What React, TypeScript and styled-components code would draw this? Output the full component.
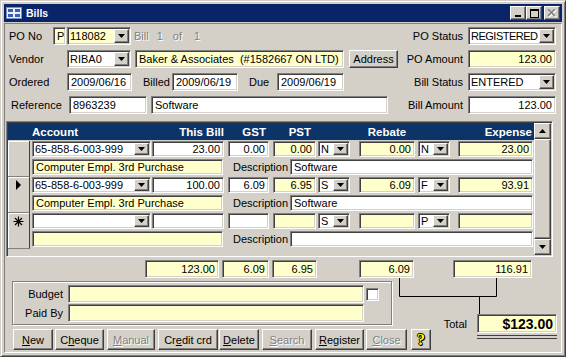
import React from 'react'
import styled, { createGlobalStyle, css } from 'styled-components'

const FACE = '#d4d0c8'
const YELLOW = '#ffffcc'

const GlobalStyle = createGlobalStyle`
  * { box-sizing: border-box; }
  html, body { margin: 0; padding: 0; background: ${FACE}; }
  body {
    font-family: "Liberation Sans", Arial, sans-serif;
    font-size: 11px;
    color: #000;
  }
`

const sunken = css`
  border: 1px solid;
  border-color: #808080 #ffffff #ffffff #808080;
  box-shadow: inset 1px 1px 0 #404040, inset -1px -1px 0 ${FACE};
`

const raised = css`
  border: 1px solid;
  border-color: #ffffff #404040 #404040 #ffffff;
  box-shadow: inset -1px -1px 0 #808080;
`

const Window = styled.div`
  width: 566px;
  height: 357px;
  padding: 3px;
  background: ${FACE};
  border: 1px solid;
  border-color: ${FACE} #404040 #404040 ${FACE};
  box-shadow: inset 1px 1px 0 #fff, inset -1px -1px 0 #808080;
  display: flex;
  flex-direction: column;
`

const TitleBar = styled.div`
  height: 18px;
  flex-shrink: 0;
  background: #0a246a;
  display: flex;
  align-items: center;
  padding: 0 2px 0 2px;
  color: #fff;
`

const Title = styled.span`
  margin-left: 4px;
  font-weight: bold;
  font-size: 10.5px;
`

const CaptionGroup = styled.div`
  margin-left: auto;
  display: flex;
  align-items: center;
`

const CapBtn = styled.div<{ $ml?: number }>`
  ${raised}
  width: 16px;
  height: 14px;
  margin-left: ${p => p.$ml ?? 0}px;
  background: ${FACE};
  display: flex;
  align-items: center;
  justify-content: center;
`

const MinGlyph = styled.div`
  width: 6px;
  height: 2px;
  background: #000;
  margin-top: 6px;
  margin-right: 1px;
`

const MaxGlyph = styled.div`
  width: 9px;
  height: 9px;
  border: 1px solid #000;
  border-top-width: 2px;
`

const Client = styled.div`
  flex: 1;
  margin-top: 1px;
  border: 1px solid;
  border-color: #808080 #ffffff #ffffff #808080;
  display: flex;
  flex-direction: column;
  min-height: 0;
`

const TopForm = styled.div`
  display: flex;
  flex-direction: column;
  gap: 5px;
  padding: 3px 5px 0 4px;
`

const Row = styled.div`
  display: flex;
  align-items: center;
  height: 18px;
`

const Label = styled.span<{ $w?: number; $ml?: number; $right?: boolean }>`
  flex-shrink: 0;
  width: ${p => (p.$w ? `${p.$w}px` : 'auto')};
  margin-left: ${p => p.$ml ?? 0}px;
  text-align: ${p => (p.$right ? 'right' : 'left')};
  white-space: nowrap;
`

const Dim = styled.span<{ $ml: number }>`
  margin-left: ${p => p.$ml}px;
  color: #808080;
  text-shadow: 1px 1px 0 #fff;
`

const RightGroup = styled.div`
  margin-left: auto;
  display: flex;
  align-items: center;
`

type BoxProps = { $w: number; $h?: number; $ml?: number; $bg?: string; $right?: boolean }

const Field = styled.div<BoxProps>`
  ${sunken}
  flex-shrink: 0;
  width: ${p => p.$w}px;
  height: ${p => p.$h ?? 18}px;
  margin-left: ${p => p.$ml ?? 0}px;
  background: ${p => p.$bg ?? '#fff'};
  padding: 0 ${p => (p.$right ? 3 : 2)}px 0 3px;
  display: flex;
  align-items: center;
  justify-content: ${p => (p.$right ? 'flex-end' : 'flex-start')};
  white-space: nowrap;
  overflow: hidden;
  line-height: 1;
`

const ComboBox = styled(Field)`
  padding-right: 1px;
  padding-left: 2px;
  justify-content: space-between;
`

const ComboText = styled.span<{ $tight?: boolean }>`
  flex: 1;
  overflow: hidden;
  letter-spacing: ${p => (p.$tight ? '-0.5px' : 'normal')};
`

const DropButton = styled.div`
  ${raised}
  width: 15px;
  align-self: stretch;
  margin: 1px 0;
  background: ${FACE};
  display: flex;
  align-items: center;
  justify-content: center;
  flex-shrink: 0;
`

const Arrow = ({ up }: { up?: boolean }) => (
  <svg width="7" height="4" viewBox="0 0 7 4">
    <polygon points={up ? '0,4 7,4 3.5,0' : '0,0 7,0 3.5,4'} fill="#000" />
  </svg>
)

function Combo(props: { w: number; ml?: number; h?: number; bg?: string; tight?: boolean; children?: React.ReactNode }) {
  return (
    <ComboBox $w={props.w} $ml={props.ml} $h={props.h} $bg={props.bg}>
      <ComboText $tight={props.tight}>{props.children}</ComboText>
      <DropButton>
        <Arrow />
      </DropButton>
    </ComboBox>
  )
}

const Button = styled.div<{ $w: number; $ml?: number; $h?: number; $off?: boolean }>`
  ${raised}
  flex-shrink: 0;
  width: ${p => p.$w}px;
  height: ${p => p.$h ?? 21}px;
  margin-left: ${p => p.$ml ?? 0}px;
  background: ${FACE};
  display: flex;
  align-items: center;
  justify-content: center;
  white-space: nowrap;
  color: ${p => (p.$off ? '#808080' : '#000')};
  text-shadow: ${p => (p.$off ? '1px 1px 0 #fff' : 'none')};

  u {
    text-decoration: underline;
  }
`

const HelpMark = styled.span`
  font-family: "Liberation Serif", serif;
  font-weight: bold;
  font-size: 16px;
  color: #ffff00;
  text-shadow: 1px 0 0 #000, -1px 0 0 #000, 0 1px 0 #000, 0 -1px 0 #000, 1px 1px 0 #000;
`

/* subform */

const Subform = styled.div`
  ${sunken}
  margin: 7px 8px 0 1px;
  height: 136px;
  padding: 1px;
  display: flex;
  background: ${FACE};
  flex-shrink: 0;
`

const GridArea = styled.div`
  flex: 1;
  display: flex;
  flex-direction: column;
`

const GridHead = styled.div`
  height: 17px;
  background: #0c3468;
  display: flex;
  align-items: center;
  color: #fff;
  font-weight: bold;
  font-size: 11.5px;
  flex-shrink: 0;
`

const HeadCell = styled.div<{ $w: number; $ml?: number; $align?: string; $pr?: number }>`
  flex-shrink: 0;
  width: ${p => p.$w}px;
  margin-left: ${p => p.$ml ?? 0}px;
  padding-right: ${p => p.$pr ?? 0}px;
  text-align: ${p => p.$align ?? 'left'};
  white-space: nowrap;
`

const Records = styled.div`
  padding-top: 1px;
  display: flex;
  flex-direction: column;
`

const Record = styled.div`
  display: flex;
  height: 36px;
`

const Selector = styled.div`
  width: 22px;
  height: 36px;
  flex-shrink: 0;
  background: ${FACE};
  border-right: 1px solid #404040;
  border-bottom: 1px solid #808080;
  box-shadow: inset 1px 1px 0 #fff;
  display: flex;
  justify-content: center;
  padding-top: 3px;
`

const Lines = styled.div`
  display: flex;
  flex-direction: column;
  gap: 2px;
`

const Line = styled.div`
  display: flex;
  align-items: center;
  height: 16px;
`

const ScrollBar = styled.div`
  width: 17px;
  display: flex;
  flex-direction: column;
  flex-shrink: 0;
`

const ScrollBtn = styled.div`
  ${raised}
  height: 16px;
  background: ${FACE};
  display: flex;
  align-items: center;
  justify-content: center;
`

const ScrollThumb = styled.div`
  ${raised}
  flex: 1;
  background: ${FACE};
`

/* totals and bottom */

const TotalsRow = styled.div`
  display: flex;
  height: 18px;
  margin-top: 3px;
  padding-left: 140px;
  flex-shrink: 0;
`

const BottomArea = styled.div`
  flex: 1;
  display: flex;
  position: relative;
`

const LeftCol = styled.div`
  display: flex;
  flex-direction: column;
  padding-left: 7px;
`

const GroupBox = styled.div`
  margin-top: 3px;
  width: 380px;
  height: 44px;
  border: 1px solid #808080;
  box-shadow: inset 1px 1px 0 #fff, 1px 1px 0 #fff;
  padding-top: 3px;
  display: flex;
  flex-direction: column;
  gap: 1px;
`

const CheckBox = styled.div`
  ${sunken}
  width: 13px;
  height: 13px;
  margin-left: 2px;
  background: #fff;
  flex-shrink: 0;
`

const ButtonRow = styled.div`
  display: flex;
  margin-top: 4px;
  padding-left: 1px;
`

const RightCol = styled.div`
  flex: 1;
  display: flex;
  flex-direction: column;
  align-items: flex-end;
  padding: 36px 4px 0 0;
`

const TotalLine = styled.div`
  display: flex;
  align-items: center;
`

const TotalBox = styled(Field)`
  font-weight: bold;
  font-size: 14px;
`

const DoubleRule = styled.div`
  width: 80px;
  height: 4px;
  margin-top: 2px;
  border-top: 1px solid #404040;
  border-bottom: 1px solid #404040;
`

const Connector = styled.svg`
  position: absolute;
  left: 390px;
  top: 0;
`

const TitleIcon = () => (
  <svg width="16" height="14" viewBox="0 0 16 14">
    <rect x="0.5" y="1.5" width="15" height="11" fill="#e8eef8" stroke="#7890c0" />
    <rect x="2" y="3" width="5" height="3" fill="#3a5fb0" />
    <rect x="9" y="3" width="5" height="3" fill="#3a5fb0" />
    <rect x="2" y="8" width="5" height="3" fill="#3a5fb0" />
    <rect x="9" y="8" width="5" height="3" fill="#3a5fb0" />
  </svg>
)

const CloseGlyph = () => (
  <svg width="10" height="9" viewBox="0 0 10 9">
    <path d="M2 1 L9 8 M9 1 L2 8" stroke="#fff" strokeWidth="1.6" />
    <path d="M1 0 L8 7 M8 0 L1 7" stroke="#808080" strokeWidth="1.6" />
  </svg>
)

const CurrentMark = () => (
  <svg width="7" height="10" viewBox="0 0 7 10">
    <polygon points="1,0 6,5 1,10" fill="#000" />
  </svg>
)

const NewMark = () => (
  <svg width="11" height="11" viewBox="0 0 11 11">
    <path d="M5.5 0.5 V10.5 M0.5 5.5 H10.5 M2 2 L9 9 M9 2 L2 9" stroke="#000" strokeWidth="1.2" />
  </svg>
)

type Rec = {
  mark?: 'current' | 'new'
  account: string
  bill: string
  gst: string
  pst: string
  pstCode: string
  rebate: string
  rebCode: string
  expense: string
  name: string
  desc: string
}

const records: Rec[] = [
  { account: '65-858-6-003-999', bill: '23.00', gst: '0.00', pst: '0.00', pstCode: 'N', rebate: '0.00', rebCode: 'N', expense: '23.00', name: 'Computer Empl. 3rd Purchase', desc: 'Software' },
  { mark: 'current', account: '65-858-6-003-999', bill: '100.00', gst: '6.09', pst: '6.95', pstCode: 'S', rebate: '6.09', rebCode: 'F', expense: '93.91', name: 'Computer Empl. 3rd Purchase', desc: 'Software' },
  { mark: 'new', account: '', bill: '', gst: '', pst: '', pstCode: 'S', rebate: '', rebCode: 'P', expense: '', name: '', desc: '' },
]

export default function App() {
  return (
    <>
      <GlobalStyle />
      <Window>
        <TitleBar>
          <TitleIcon />
          <Title>Bills</Title>
          <CaptionGroup>
            <CapBtn><MinGlyph /></CapBtn>
            <CapBtn><MaxGlyph /></CapBtn>
            <CapBtn $ml={2}><CloseGlyph /></CapBtn>
          </CaptionGroup>
        </TitleBar>

        <Client>
          <TopForm>
            <Row>
              <Label $w={44}>PO No</Label>
              <Field $w={13} $bg={YELLOW}>P</Field>
              <Combo w={64} ml={1} bg={YELLOW}>118082</Combo>
              <Dim $ml={3}>Bill</Dim>
              <Dim $ml={8}>1</Dim>
              <Dim $ml={10}>of</Dim>
              <Dim $ml={12}>1</Dim>
              <RightGroup>
                <Label>PO Status</Label>
                <Combo w={88} ml={5} tight>REGISTERED</Combo>
              </RightGroup>
            </Row>
            <Row>
              <Label $w={58}>Vendor</Label>
              <Combo w={64}>RIBA0</Combo>
              <Field $w={209} $ml={4} $bg={YELLOW}>Baker &amp; Associates&nbsp; (#1582667 ON LTD)</Field>
              <Button $w={49} $h={18} $ml={5}>Address</Button>
              <RightGroup>
                <Label>PO Amount</Label>
                <Field $w={88} $ml={5} $bg={YELLOW} $right>123.00</Field>
              </RightGroup>
            </Row>
            <Row>
              <Label $w={58}>Ordered</Label>
              <Field $w={65}>2009/06/16</Field>
              <Label $w={29} $ml={11}>Billed</Label>
              <Field $w={66}>2009/06/19</Field>
              <Label $w={28} $ml={11}>Due</Label>
              <Field $w={67}>2009/06/19</Field>
              <RightGroup>
                <Label>Bill Status</Label>
                <Combo w={88} ml={5}>ENTERED</Combo>
              </RightGroup>
            </Row>
            <Row>
              <Label $w={58} $ml={2}>Reference</Label>
              <Field $w={78}>8963239</Field>
              <Field $w={237} $ml={4}>Software</Field>
              <RightGroup>
                <Label>Bill Amount</Label>
                <Field $w={88} $ml={5} $right>123.00</Field>
              </RightGroup>
            </Row>
          </TopForm>

          <Subform>
            <GridArea>
              <GridHead>
                <HeadCell $w={24} />
                <HeadCell $w={119}>Account</HeadCell>
                <HeadCell $w={72} $ml={1} $align="right">This Bill</HeadCell>
                <HeadCell $w={41} $ml={4} $align="right" $pr={3}>GST</HeadCell>
                <HeadCell $w={43} $ml={4} $align="right" $pr={5}>PST</HeadCell>
                <HeadCell $w={32} $ml={2} />
                <HeadCell $w={56} $ml={9} $align="center">Rebate</HeadCell>
                <HeadCell $w={32} $ml={3} />
                <HeadCell $w={75} $ml={8} $align="right" $pr={1}>Expense</HeadCell>
              </GridHead>
              <Records>
                {records.map((r, i) => (
                  <Record key={i}>
                    <Selector>
                      {r.mark === 'current' && <CurrentMark />}
                      {r.mark === 'new' && <NewMark />}
                    </Selector>
                    <Lines>
                      <Line>
                        <Combo w={119} ml={2} h={16}>{r.account}</Combo>
                        <Field $w={72} $ml={1} $h={16} $right>{r.bill}</Field>
                        <Field $w={41} $ml={4} $h={16} $right>{r.gst}</Field>
                        <Field $w={43} $ml={4} $h={16} $bg={YELLOW} $right>{r.pst}</Field>
                        <Combo w={32} ml={2} h={16}>{r.pstCode}</Combo>
                        <Field $w={56} $ml={9} $h={16} $bg={YELLOW} $right>{r.rebate}</Field>
                        <Combo w={32} ml={3} h={16}>{r.rebCode}</Combo>
                        <Field $w={75} $ml={8} $h={16} $bg={YELLOW} $right>{r.expense}</Field>
                      </Line>
                      <Line>
                        <Field $w={191} $ml={2} $h={16} $bg={YELLOW}>{r.name}</Field>
                        <Label $w={57} $ml={10}>Description</Label>
                        <Field $w={243} $h={16}>{r.desc}</Field>
                      </Line>
                    </Lines>
                  </Record>
                ))}
              </Records>
            </GridArea>
            <ScrollBar>
              <ScrollBtn><Arrow up /></ScrollBtn>
              <ScrollThumb />
              <ScrollBtn><Arrow /></ScrollBtn>
            </ScrollBar>
          </Subform>

          <TotalsRow>
            <Field $w={74} $bg={YELLOW} $right>123.00</Field>
            <Field $w={47} $ml={3} $bg={YELLOW} $right>6.09</Field>
            <Field $w={45} $ml={3} $bg={YELLOW} $right>6.95</Field>
            <Field $w={55} $ml={42} $bg={YELLOW} $right>6.09</Field>
            <Field $w={79} $ml={39} $bg={YELLOW} $right>116.91</Field>
          </TotalsRow>

          <BottomArea>
            <LeftCol>
              <GroupBox>
                <Row>
                  <Label $w={50} $right>Budget</Label>
                  <Field $w={296} $ml={5} $bg={YELLOW} />
                  <CheckBox />
                </Row>
                <Row>
                  <Label $w={50} $right>Paid By</Label>
                  <Field $w={296} $ml={5} $bg={YELLOW} />
                </Row>
              </GroupBox>
              <ButtonRow>
                <Button $w={40}><span><u>N</u>ew</span></Button>
                <Button $w={49} $ml={2}><span>C<u>h</u>eque</span></Button>
                <Button $w={48} $ml={3} $off><span><u>M</u>anual</span></Button>
                <Button $w={60} $ml={3}><span>Cr<u>e</u>dit crd</span></Button>
                <Button $w={40} $ml={1}><span><u>D</u>elete</span></Button>
                <Button $w={50} $ml={3} $off><span><u>S</u>earch</span></Button>
                <Button $w={49} $ml={3}><span><u>R</u>egister</span></Button>
                <Button $w={41} $ml={2} $off><span><u>C</u>lose</span></Button>
                <Button $w={20} $ml={4}><HelpMark>?</HelpMark></Button>
              </ButtonRow>
            </LeftCol>
            <RightCol>
              <TotalLine>
                <Label>Total</Label>
                <TotalBox $w={80} $h={19} $ml={10} $bg={YELLOW} $right>$123.00</TotalBox>
              </TotalLine>
              <DoubleRule />
            </RightCol>
            <Connector width="110" height="37" viewBox="0 0 110 37">
              <path d="M4.5 0 V18.5 H101.5 V0 M84.5 18.5 V36" fill="none" stroke="#000" strokeWidth="1" />
            </Connector>
          </BottomArea>
        </Client>
      </Window>
    </>
  )
}
